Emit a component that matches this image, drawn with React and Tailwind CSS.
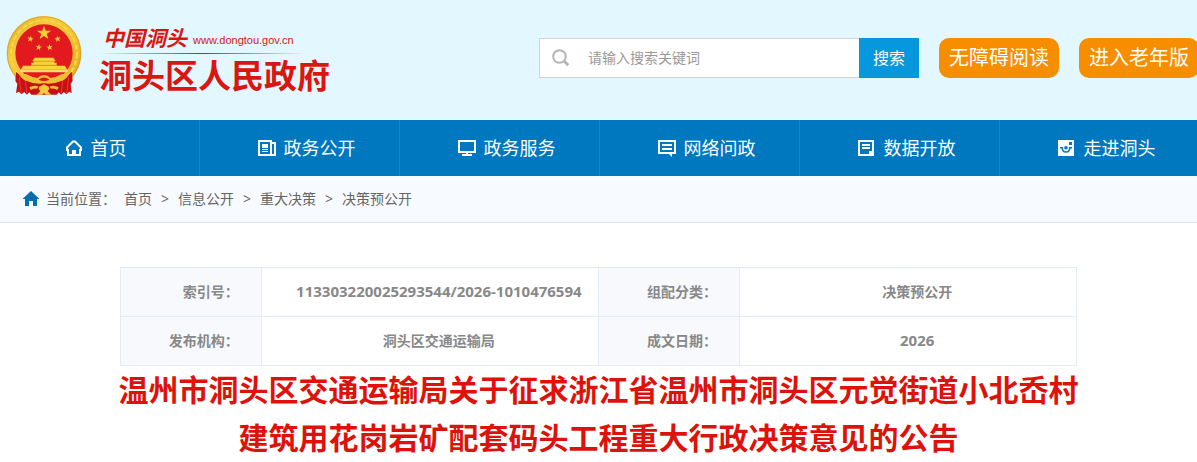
import React from "react";

const NAV = [
  { label: "首页", icon: "home", pad: "pr-2" },
  { label: "政务公开", icon: "news", pad: "pl-3.5" },
  { label: "政务服务", icon: "screen", pad: "pl-3.5" },
  { label: "网络问政", icon: "chat", pad: "pl-3.5" },
  { label: "数据开放", icon: "note", pad: "pl-3.5" },
  { label: "走进洞头", icon: "camera", pad: "pl-3.5" },
];

const CRUMBS = ["首页", "信息公开", "重大决策", "决策预公开"];

const STAR = "M0 -10L2.4 -3.2L9.5 -3.1L3.8 1.2L5.9 8.1L0 4L-5.9 8.1L-3.8 1.2L-9.5 -3.1L-2.4 -3.2Z";

function Emblem() {
  return (
    <svg viewBox="18 45 228 243" className="h-[81px] w-[76px] shrink-0" aria-hidden="true">
      <defs>
        <linearGradient id="gold" x1="0" y1="0" x2="1" y2="1">
          <stop offset="0" stopColor="#d9a528" />
          <stop offset="0.3" stopColor="#f6cc3c" />
          <stop offset="0.6" stopColor="#f2c030" />
          <stop offset="1" stopColor="#dfa321" />
        </linearGradient>
      </defs>
      <circle cx="132" cy="160" r="112" fill="url(#gold)" />
      <circle cx="132" cy="160" r="99" fill="none" stroke="#f9d548" strokeWidth="6" strokeDasharray="16 6" />
      <circle cx="132" cy="160" r="110" fill="none" stroke="#cf9a22" strokeWidth="2" />
      <circle cx="132" cy="159" r="86" fill="#e21a1f" />
      <path fill="#f9cf33" transform="translate(132 99) scale(2.2)" d={STAR} />
      <path fill="#f9cf33" transform="translate(91 117) rotate(12)" d={STAR} />
      <path fill="#f9cf33" transform="translate(173 117) rotate(-12)" d={STAR} />
      <path fill="#f9cf33" transform="translate(116 142) rotate(8)" d={STAR} />
      <path fill="#f9cf33" transform="translate(149 142) rotate(-8)" d={STAR} />
      <path fill="#fbd23b" d="M104 173H160L167 183H163V188H170V197H94V188H101V183H97Z" />
      <path fill="#fbd23b" d="M69 197H195L201 208H63Z" />
      <path stroke="#d9801c" strokeWidth="2" d="M101 184H163M94 196H170" />
      <path fill="#fbd86a" d="M61 208H203V217H61Z" />
      <path fill="#c80f14" d="M48 216L72 234L98 248H166L192 234L216 216L218 242L212 252L215 279L207 275L200 283L191 276L184 284L176 277L170 284H94L88 277L80 284L73 276L64 283L57 275L48 279L52 252L46 242Z" />
      <path fill="none" stroke="#e83a30" strokeWidth="3" d="M58 232L64 280M76 240L80 280M206 232L200 280M188 240L184 280" />
      <path fill="#f0be33" d="M52 212Q62 224 78 222Q96 232 112 234Q132 216 152 234Q168 232 186 222Q202 224 212 212Q204 236 184 243Q158 254 132 250Q106 254 80 243Q60 236 52 212Z" />
      <path fill="#d9161a" d="M116 239Q132 226 148 239Q132 247 116 239Z" />
      <path fill="#f5c83e" d="M118 260L132 253L146 260L148 267L143 274L154 284H138L132 279L126 284H110L121 274L116 267Z" />
      <path fill="#efbd32" d="M88 262Q102 254 116 260L110 266Q100 264 92 270ZM176 262Q162 254 148 260L154 266Q164 264 172 270Z" />
    </svg>
  );
}

function NavIcon({ name }) {
  return (
    <svg viewBox="0 0 18 18" className="size-[18px] shrink-0" fill="none" stroke="currentColor" strokeWidth="2" aria-hidden="true">
      {name === "home" && (
        <>
          <path d="M3 17V11H2V8.5L8 2.5H10L16 8.5V11H15V16H3" />
          <path d="M9 11V16" strokeWidth="4" />
        </>
      )}
      {name === "news" && (
        <>
          <path d="M1 2H13V16H1Z" />
          <path d="M13 4H17V16H12" />
          <path d="M4 7H10" strokeWidth="4" />
          <path d="M4 10.5H10M4 12.5H10" strokeWidth="1" />
        </>
      )}
      {name === "screen" && (
        <>
          <path d="M1 2H17V13H1Z" />
          <path d="M9 13V16M4 16H14" />
        </>
      )}
      {name === "chat" && (
        <>
          <path d="M1 2H17V14H1Z" />
          <path d="M4 6H14M4 10H14" />
          <path d="M10 14H14V18Z" fill="currentColor" stroke="none" />
        </>
      )}
      {name === "note" && (
        <>
          <path d="M1 2H15V16H1Z" />
          <path d="M4 6H12M4 9H12" />
          <path d="M11 12H15V16H11Z" fill="currentColor" stroke="none" />
        </>
      )}
      {name === "camera" && (
        <>
          <path fill="currentColor" stroke="none" d="M0 1H16V17H0Z" />
          <path fill="#0078bf" stroke="none" d="M11 3H14V6H11ZM2 8H5V9.5H2ZM11 8H14V9.5H11Z" />
          <path d="M4.2 8Q4 13 8 13Q12 13 11.8 8" stroke="#0078bf" strokeWidth="1.6" />
          <circle cx="8" cy="8.7" r="1.8" fill="#0078bf" stroke="none" />
        </>
      )}
    </svg>
  );
}

function LabelCell({ children }) {
  return (
    <th scope="row" className="w-[141px] border border-[#e4ecf2] bg-[#f7f9fc] pr-[22px] text-right font-bold">
      {children}
    </th>
  );
}

function ValueCell({ children, numeric }) {
  return (
    <td className={numeric ? "border border-[#e4ecf2] pl-[18px] text-center text-[15px]" : "border border-[#e4ecf2] pl-[18px] text-center"}>
      {children}
    </td>
  );
}

export default function App() {
  return (
    <div className="overflow-hidden bg-white font-['Open_Sans','Noto_Sans_CJK_SC',sans-serif] text-sm text-[#666]">
      <div className="min-w-[1200px]">
        <header className="flex h-[120px] items-start justify-between bg-[#e2f7ff] pl-1.5">
          <a href="#" className="flex pt-[15px] text-[#d9160f]">
            <Emblem />
            <span className="flex flex-col pl-[17px] pt-2">
              <span className="flex h-7 items-center gap-1.5 pl-1">
                <span className="font-['Noto_Sans_CJK_SC',sans-serif] text-[21px] font-bold italic leading-6">中国洞头</span>
                <span className="pt-1.5 font-['Liberation_Sans',sans-serif] text-[11px] leading-4">www.dongtou.gov.cn</span>
              </span>
              <span className="mt-0.5 mr-6 h-px bg-linear-to-r/srgb from-[#e2f7ff] via-[#d9160f] to-[#e2f7ff]" />
              <span className="font-['Noto_Sans_CJK_SC',sans-serif] text-[33px] font-bold leading-10">洞头区人民政府</span>
            </span>
          </a>
          <div className="flex gap-5 pr-px pt-[38px]">
            <form className="flex h-10" onSubmit={(e) => e.preventDefault()}>
              <label className="flex w-80 items-center border border-r-0 border-[#d2d2d2] bg-white pl-3">
                <svg viewBox="0 0 18 18" className="size-[18px] shrink-0" fill="none" stroke="#b5b5b5" strokeWidth="2" aria-hidden="true">
                  <circle cx="7.5" cy="7.5" r="6.3" />
                  <path d="M12 12L16.3 16.3" strokeWidth="3" />
                </svg>
                <input
                  type="text"
                  aria-label="请输入搜索关键词"
                  placeholder="请输入搜索关键词"
                  className="min-w-0 flex-1 pl-[18px] text-sm outline-none placeholder:text-[#999]"
                />
              </label>
              <button type="submit" className="w-[60px] bg-[#0697dc] text-base text-white">搜索</button>
            </form>
            <button type="button" className="h-10 w-[120px] rounded-[10px] bg-[#f68e00] text-xl text-white">无障碍阅读</button>
            <button type="button" className="h-10 w-[120px] rounded-[10px] bg-[#f68e00] text-xl text-white">进入老年版</button>
          </div>
        </header>

        <nav className="grid h-14 grid-cols-6 bg-[#0078bf] text-lg text-white">
          {NAV.map((n) => (
            <a key={n.label} href="#" className={"flex items-center justify-center gap-2 border-r border-[#1a86c7] " + n.pad}>
              <NavIcon name={n.icon} />
              {n.label}
            </a>
          ))}
        </nav>
      </div>

      <nav aria-label="当前位置" className="flex h-[47px] items-center border-b border-[#e1e8ef] bg-[#f7fbff] pl-[22px]">
        <svg viewBox="0 0 18 16" className="h-4 w-[18px] shrink-0" fill="#006fb0" aria-hidden="true">
          <path d="M9 0L17.5 8H15V15H11V10H7V15H3V8H0.5Z" />
        </svg>
        <span className="pl-1.5">当前位置：</span>
        <ol className="flex pl-2">
          {CRUMBS.map((c, i) => (
            <li key={c} className="flex">
              {i > 0 && <span className="px-[9px]">&gt;</span>}
              <a href="#">{c}</a>
            </li>
          ))}
        </ol>
      </nav>

      <main className="pt-11">
        <div className="mx-auto w-4/5">
          <table className="w-full table-fixed border-collapse font-bold text-[#888]">
            <tbody>
              <tr className="h-[49px]">
                <LabelCell>索引号：</LabelCell>
                <ValueCell numeric>113303220025293544/2026-1010476594</ValueCell>
                <LabelCell>组配分类：</LabelCell>
                <ValueCell>决策预公开</ValueCell>
              </tr>
              <tr className="h-[49px]">
                <LabelCell>发布机构：</LabelCell>
                <ValueCell>洞头区交通运输局</ValueCell>
                <LabelCell>成文日期：</LabelCell>
                <ValueCell numeric>2026</ValueCell>
              </tr>
            </tbody>
          </table>
        </div>
        <h1 className="text-center text-[30px] font-bold leading-[48px] text-[#dd130b]">
          温州市洞头区交通运输局关于征求浙江省温州市洞头区元觉街道小北岙村
          <br />
          建筑用花岗岩矿配套码头工程重大行政决策意见的公告
        </h1>
      </main>
    </div>
  );
}
